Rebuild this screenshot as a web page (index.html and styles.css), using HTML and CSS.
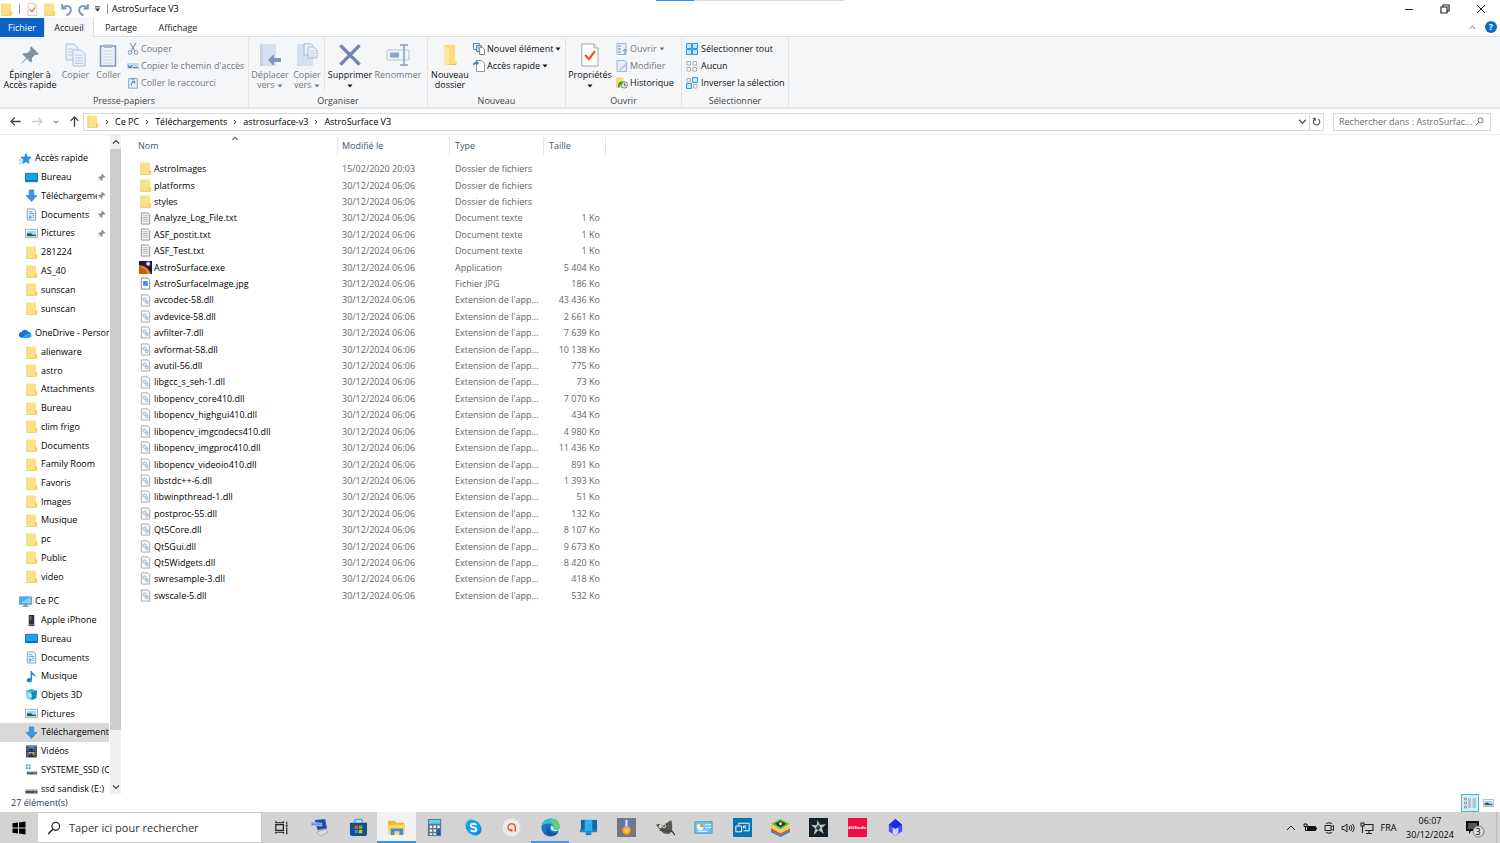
FILE: index.html
```html
<!DOCTYPE html>
<html lang="fr">
<head>
<meta charset="utf-8">
<title>AstroSurface V3</title>
<link rel="stylesheet" href="styles.css">
</head>
<body>
<svg class="defs" aria-hidden="true">
  <symbol id="folder" viewBox="0 0 12 13"><path d="M1 .5h9.500V8L12 9v3.500H1z" fill="#fbe08a"/><path d="M1 .5h1v12H1z" fill="#f1cf67"/><path d="M9.500 8.500H11v3.500H9.500z" fill="#f3c94f"/><path d="M1 12h10v.8H1z" fill="#eccb62"/></symbol>
  <symbol id="bigfolder" viewBox="0 0 16 24"><path d="M2 2h11v16l2 1v3H2z" fill="#fbdc76"/><path d="M2 2l5 3v18l-5-2z" fill="#ffe9a0"/><path d="M7 21h7v1H7z" fill="#edc14d"/></symbol>
  <symbol id="txt" viewBox="0 0 12 14"><path d="M1.500 1h7l2 2v10h-9z" fill="#f6f6f6" stroke="#8d8d8d"/><path d="M3 4h6M3 6h6M3 8h6M3 10h6" stroke="#a9a9a9" stroke-width=".9"/></symbol>
  <symbol id="dll" viewBox="0 0 12 14"><path d="M1.500 1h7l2 2v10h-9z" fill="#fafafa" stroke="#a4a4a4"/><circle cx="5" cy="6" r="1.900" fill="#dce8f0" stroke="#9aaebc" stroke-width=".8"/><circle cx="7.500" cy="9" r="1.600" fill="#d2e5f4" stroke="#91a9bd" stroke-width=".8"/></symbol>
  <symbol id="jpg" viewBox="0 0 12 14"><path d="M1.500 1h7l2 2v10h-9z" fill="#fff" stroke="#808080"/><path d="M3.500 4.500h5v5h-5z" fill="#2086e0"/><path d="M4 9l4-4v1L5 9z" fill="#9ed8ff"/></symbol>
  <symbol id="exe" viewBox="0 0 12 12"><path d="M0 0h12v12H0z" fill="#22183f"/><path d="M0 4c5 0 9 3 11 8H0z" fill="#e78a10"/><path d="M0 5c4 1 6 3 8 7H0z" fill="#c45c08"/><circle cx="8.500" cy="2.500" r="2" fill="#a9a5ff"/><circle cx="8.500" cy="2.500" r="1" fill="#fff"/></symbol>
  <symbol id="pin" viewBox="0 0 16 16"><path d="M9 1l6 6-1.500 1-1.500-.3-2.500 2.600.2 2.700L8.500 14 5.600 11 1 15.200.8 15 5 10.400 2 7.500l1-1.200 2.700.2L8.300 4 8 2.500z" fill="#8493a0"/></symbol>
  <symbol id="star" viewBox="0 0 12 12"><path d="M6.500 .5l1.400 3.700 4 .4-3 2.600.9 4-3.300-2-3.500 2 .9-4-3-2.600 4-.4z" fill="#2f8fe0"/><path d="M0 11l4-3M0 8l2-1" stroke="#7fc0f5"/></symbol>
  <symbol id="desk" viewBox="0 0 14 12"><path d="M.5 1.500h13v9H.5z" fill="#1aa0f0" stroke="#0c6fc0"/><path d="M1 9h12v1H1z" fill="#0a5ea8"/></symbol>
  <symbol id="down" viewBox="0 0 14 14"><path d="M4.500 1h5v6H13l-6 6.500L1 7h3.500z" fill="#3d96e4" stroke="#2675c4" stroke-width=".6"/></symbol>
  <symbol id="docs" viewBox="0 0 12 14"><path d="M1.500 1h7l2 2v10h-9z" fill="#f4f9fc" stroke="#8a99a5"/><path d="M3 4h4M3 6h6M7 8h2M7 10h2" stroke="#4aa0d8"/><path d="M3 8h3v3.500H3z" fill="#6bb5e3"/></symbol>
  <symbol id="pics" viewBox="0 0 14 12"><path d="M.5 1.500h13v9H.5z" fill="#fff" stroke="#9aa8b0"/><path d="M2 3h10v6H2z" fill="#a7d5f2"/><path d="M2 6l4-.5 3 2 3-.5v2H2z" fill="#276075"/></symbol>
  <symbol id="cloud" viewBox="0 0 14 10"><path d="M3 9.500a3 3 0 01-.3-6A4 4 0 0110 3a3.300 3.300 0 01.5 6.500z" fill="#147ad0"/><path d="M3 9.500l6-4.500c3-.6 5 1 4.500 3-.4 1-1 1.500-2.500 1.500z" fill="#28a4ec"/></symbol>
  <symbol id="pc" viewBox="0 0 14 13"><path d="M.5 1.500h13v8H.5z" fill="#3cb4f3" stroke="#6e99b8"/><path d="M2 8l9-6h2v6z" fill="#7dd0fa"/><path d="M5 10h4v1.500h2v1H3v-1h2z" fill="#8297a6"/></symbol>
  <symbol id="phone" viewBox="0 0 12 14"><path d="M3 1h6v12H3z" fill="#303236"/><path d="M4 3h2v1H4zM4 5h2v1H4z" fill="#79d18b"/><path d="M3 11h6v1H3z" fill="#888"/></symbol>
  <symbol id="music" viewBox="0 0 12 14"><path d="M5 1h1.500c.5 3 4.500 3 3.500 7-.6-2-2-2.500-3.500-2.500V11a2.800 2.300 0 11-1.500-2z" fill="#148ae2"/></symbol>
  <symbol id="cube" viewBox="0 0 14 14"><path d="M1 3l6-2 6 2-1 8-5 2-5-2z" fill="#29b5cf"/><path d="M1 3l6 2v8l-5-2z" fill="#83dcea"/><path d="M7 5l6-2-1 8-5 2z" fill="#0d8fae"/><path d="M4 6l3 1v3l-3-1z" fill="#fff" opacity=".7"/></symbol>
  <symbol id="film" viewBox="0 0 12 13"><path d="M.5.5h11v12H.5z" fill="#3b3d42"/><path d="M3 1h6v5H3z" fill="#498dd1"/><path d="M3 7h6v5H3z" fill="#d99d4f"/><path d="M1.500 1v11M10.500 1v11" stroke="#a7a7a7" stroke-dasharray="1 1"/><path d="M3 4l3-1 3 2v1H3zM3 10l3-2 3 3v1H3z" fill="#233965"/></symbol>
  <symbol id="ssd" viewBox="0 0 14 13"><path d="M1 1h2v2H1zM4 1h2v2H4zM1 4h2v2H1zM4 4h2v2H4z" fill="#16a6ee"/><path d="M3 8h9l1 1.500v2.500H2V9.500z" fill="#565a5c"/><path d="M3 8h9l1 1.500H2z" fill="#c5c8c9"/><path d="M10 11h2" stroke="#4bd16b"/></symbol>
  <symbol id="drive" viewBox="0 0 14 13"><path d="M2 7h10l1.500 2v3H.5V9z" fill="#494c4e"/><path d="M2 7h10l1.500 2H.5z" fill="#c5c8c9"/><path d="M10 10.500h2" stroke="#4bd16b"/></symbol>
  <symbol id="chev" viewBox="0 0 8 8"><path d="M1 2.500L4 5.500 7 2.500" fill="none" stroke="currentColor" stroke-width="1.200"/></symbol>
  <symbol id="chevr" viewBox="0 0 8 8"><path d="M3 2L5 4 3 6" fill="none" stroke="currentColor"/></symbol>
  <symbol id="tri" viewBox="0 0 6 4"><path d="M.5.5h5L3 3.500z" fill="currentColor"/></symbol>
  <symbol id="check" viewBox="0 0 18 24"><path d="M.8 1H13l4 4v18H.8z" fill="#fff" stroke="#a2a5a8"/><path d="M13 1v4h4" fill="#eee" stroke="#a2a5a8"/><path d="M4 12l4 4 6-8" fill="none" stroke="#ec5d1c" stroke-width="2.200"/></symbol>
  <symbol id="copy" viewBox="0 0 22 24"><g fill="#eaf1fa" stroke="#afc0d8"><path d="M1 1h8l4 4v12H1z"/><path d="M8 7h8l4 4v12H8z"/></g><path d="M3 6h5M3 9h4M3 12h4M10 12h7M10 15h8M10 18h8M10 20.500h8" stroke="#b8cae3"/></symbol>
  <symbol id="paste" viewBox="0 0 18 24"><path d="M1.500 3h15v20h-15z" fill="#eef3fa" stroke="#7f98be" stroke-width="1.500"/><path d="M5 1.500h8v3.500H5z" fill="#a9b8cf"/><path d="M4 8h10M4 11h10M4 14h10M4 17h10M4 20h10" stroke="#c4d3e8"/></symbol>
  <symbol id="cut" viewBox="0 0 12 12"><path d="M3 0l5 8M9 0L4 8" stroke="#8399b5" stroke-width="1.200"/><circle cx="3" cy="9.500" r="1.800" fill="none" stroke="#7893bb"/><circle cx="9" cy="9.500" r="1.800" fill="none" stroke="#7893bb"/></symbol>
  <symbol id="path" viewBox="0 0 12 12"><path d="M0 3h12v6H0z" fill="#c9daf0"/><path d="M1 5l1 3 1-2 1 2 1-3M6 7.500h5" stroke="#6381ab" fill="none"/></symbol>
  <symbol id="shortcut" viewBox="0 0 12 14"><path d="M1 2h10v11H1z" fill="#eef3fa" stroke="#7590bb"/><path d="M4 1h4v2H4z" fill="#8498b6"/><path d="M4 10c0-3 1-4 3-4M5 5h3v3" fill="none" stroke="#557fb8" stroke-width="1.200"/></symbol>
  <symbol id="move" viewBox="0 0 22 24"><path d="M1 1h16v22H1z" fill="#d4e0f0"/><path d="M1 1l3 2v20H1z" fill="#c3d3e8"/><path d="M9 17l6-6v4h7v4h-7v4z" fill="#8096b8"/></symbol>
  <symbol id="copyto" viewBox="0 0 22 24"><path d="M1 1h16v22H1z" fill="#d4e0f0"/><g fill="#e9f0f9" stroke="#a8bbd7"><path d="M8 .8h7l2 2V12H8z"/><path d="M12 4h6l3 3v8h-9z"/></g><path d="M14 8h5M14 10.500h5M14 13h5" stroke="#bdcde3"/></symbol>
  <symbol id="del" viewBox="0 0 20 20"><path d="M2 2l16 16M18 2L2 18" stroke="#7085a9" stroke-width="2.800"/></symbol>
  <symbol id="ren" viewBox="0 0 24 24"><path d="M1 7h22v10H1z" fill="#eef3fa" stroke="#b5c5dc"/><path d="M4 9.500h9v5H4z" fill="#8ea5c9"/><path d="M14 2h8M18 2v20M14 22h8" stroke="#8fa0bb" stroke-width="1.600"/></symbol>
  <symbol id="newitem" viewBox="0 0 12 12"><path d="M.5.5h6v6h-6z" fill="#e2f0f7" stroke="#528fae"/><path d="M3.500 2.500h5v6h-5z" fill="#a8d3e6" stroke="#528fae"/><path d="M6.500 4.500h3l2 2v5h-5z" fill="#fff" stroke="#888"/></symbol>
  <symbol id="easy" viewBox="0 0 12 12"><path d="M3.500.5h5l3 3v8h-8z" fill="#fff" stroke="#999"/><path d="M0 6c0-3 1-4 3-4V0l3 3-3 3V4C1.500 4 1 5 0 6z" fill="#2786cb"/></symbol>
  <symbol id="open" viewBox="0 0 12 12"><path d="M1 .5h9v11H1z" fill="#e4edf8" stroke="#a2b6d1"/><path d="M2.500 3h2M2.500 6h2M2.500 9h2" stroke="#7792bb" stroke-width="1.500"/><path d="M9 11V6M7 8l2-2 2 2" fill="none" stroke="#7592bd"/></symbol>
  <symbol id="edit" viewBox="0 0 12 12"><path d="M1 .5h7l2.500 2v9H1z" fill="#e4edf8" stroke="#a2b6d1"/><path d="M3 10l7-7 1.500 1.500-7 6z" fill="#b0c4e0"/></symbol>
  <symbol id="hist" viewBox="0 0 13 12"><path d="M0 0h8v11H0z" fill="#f8db73"/><circle cx="9" cy="8" r="3.500" fill="#eee" stroke="#777"/><path d="M9 6v2.500h2" stroke="#555" fill="none"/><path d="M2 11c0-4 1-6 3-6V3.500L8 6 5 8.500V7c-1 1-1 2-1 4z" fill="#21a338"/></symbol>
  <symbol id="all" viewBox="0 0 12 12"><path d="M.5.5h5v5h-5zM6.500.5h5v5h-5zM.5 6.500h5v5h-5zM6.500 6.500h5v5h-5z" fill="#bfe4fb" stroke="#2f98df"/></symbol>
  <symbol id="none" viewBox="0 0 12 12"><path d="M1 1.500h3.500V5H1zM7 1.500h3.500V5H7zM1 7.500h3.500V11H1zM7 7.500h3.500V11H7z" fill="#fff" stroke="#a8adb1"/></symbol>
  <symbol id="inv" viewBox="0 0 12 12"><path d="M1 1.500h3.500V5H1zM7.500 7.500H11V11H7.500z" fill="#fff" stroke="#a8adb1"/><path d="M6.500.5h5v5h-5zM.5 6.500h5v5h-5z" fill="#bfe4fb" stroke="#2f98df"/></symbol>
  <symbol id="undo" viewBox="0 0 12 12"><path d="M2 1v4h4M2.500 4.500C6 1 10 3 10 6.500 10 9 8 10.500 6 11.500" fill="none" stroke="#7e96b8" stroke-width="1.800"/></symbol>
  <symbol id="mag" viewBox="0 0 12 12"><circle cx="7.500" cy="4.500" r="3.300" fill="none" stroke="currentColor"/><path d="M5 7l-4 4.200" stroke="currentColor" stroke-width="1.200"/></symbol>
  <symbol id="arrow" viewBox="0 0 10 10"><path d="M9 5H1.500M4.500 2l-3 3 3 3" fill="none" stroke="currentColor"/></symbol>
</svg>

<header class="titlebar">
  <div class="qat">
    <svg class="i"><use href="#folder"/></svg><span class="bar"></span>
    <button aria-label="Propriétés"><svg class="i"><use href="#check"/></svg></button>
    <button aria-label="Nouveau dossier"><svg class="i"><use href="#folder"/></svg></button>
    <button aria-label="Annuler"><svg class="i"><use href="#undo"/></svg></button>
    <button aria-label="Rétablir"><svg class="i flip"><use href="#undo"/></svg></button>
    <button class="more" aria-label="Personnaliser"><svg viewBox="0 0 7 6"><path d="M1 .8h5" stroke="#333"/><path d="M.8 2.500h5.400L3.500 5.500z" fill="#333"/></svg></button><span class="bar"></span>
  </div>
  <h1>AstroSurface V3</h1>
  <div class="accent"></div>
  <div class="winbtns">
    <button aria-label="Réduire"><svg viewBox="0 0 10 10"><path d="M1 5.500h8" stroke="#222"/></svg></button>
    <button aria-label="Restaurer"><svg viewBox="0 0 10 10"><path d="M1 3h6v6H1zM3 3V1h6v6H7" fill="none" stroke="#222" stroke-width="1.200"/></svg></button>
    <button aria-label="Fermer"><svg viewBox="0 0 10 10"><path d="M1 1l8 8M9 1L1 9" stroke="#222"/></svg></button>
  </div>
</header>

<nav class="tabs">
  <button class="file">Fichier</button><button class="on">Accueil</button><button>Partage</button><button>Affichage</button>
  <span class="grow"></span>
  <button class="fold" aria-label="Réduire le ruban"><svg class="flipy"><use href="#chev"/></svg></button>
  <button class="help" aria-label="Aide">?</button>
</nav>

<section class="ribbon">
  <div class="group clip">
    <div class="tools">
      <button class="big"><svg class="pinicon"><use href="#pin"/></svg>Épingler à<br>Accès rapide</button>
      <button class="big off"><svg><use href="#copy"/></svg>Copier</button>
      <button class="big off"><svg><use href="#paste"/></svg>Coller</button>
      <div class="stack off">
        <button><svg><use href="#cut"/></svg>Couper</button>
        <button><svg><use href="#path"/></svg>Copier le chemin d'accès</button>
        <button><svg><use href="#shortcut"/></svg>Coller le raccourci</button>
      </div>
    </div>
    <h2>Presse-papiers</h2>
  </div>
  <div class="group organise">
    <div class="tools">
      <button class="big off"><svg><use href="#move"/></svg>Déplacer<br>vers <svg class="t"><use href="#tri"/></svg></button>
      <button class="big off"><svg><use href="#copyto"/></svg>Copier<br>vers <svg class="t"><use href="#tri"/></svg></button>
      <button class="big rule"><svg><use href="#del"/></svg>Supprimer<br><svg class="t"><use href="#tri"/></svg></button>
      <button class="big off"><svg><use href="#ren"/></svg>Renommer</button>
    </div>
    <h2>Organiser</h2>
  </div>
  <div class="group new">
    <div class="tools">
      <button class="big"><svg><use href="#bigfolder"/></svg>Nouveau<br>dossier</button>
      <div class="stack">
        <button><svg><use href="#newitem"/></svg>Nouvel élément <svg class="t"><use href="#tri"/></svg></button>
        <button><svg><use href="#easy"/></svg>Accès rapide <svg class="t"><use href="#tri"/></svg></button>
      </div>
    </div>
    <h2>Nouveau</h2>
  </div>
  <div class="group open">
    <div class="tools">
      <button class="big"><svg><use href="#check"/></svg>Propriétés<br><svg class="t"><use href="#tri"/></svg></button>
      <div class="stack">
        <button class="off"><svg><use href="#open"/></svg>Ouvrir <svg class="t"><use href="#tri"/></svg></button>
        <button class="off"><svg><use href="#edit"/></svg>Modifier</button>
        <button><svg><use href="#hist"/></svg>Historique</button>
      </div>
    </div>
    <h2>Ouvrir</h2>
  </div>
  <div class="group select">
    <div class="tools">
      <div class="stack">
        <button><svg><use href="#all"/></svg>Sélectionner tout</button>
        <button><svg><use href="#none"/></svg>Aucun</button>
        <button><svg><use href="#inv"/></svg>Inverser la sélection</button>
      </div>
    </div>
    <h2>Sélectionner</h2>
  </div>
</section>

<section class="address">
  <div class="navbtns">
    <button aria-label="Précédent"><svg><use href="#arrow"/></svg></button>
    <button class="dim" aria-label="Suivant"><svg class="flip"><use href="#arrow"/></svg></button>
    <button class="small" aria-label="Récents"><svg><use href="#chev"/></svg></button>
    <button aria-label="Dossier parent"><svg class="up"><use href="#arrow"/></svg></button>
  </div>
  <div class="crumbs">
    <svg class="i"><use href="#folder"/></svg>
    <svg class="c"><use href="#chevr"/></svg><a href="#pc-root">Ce PC</a>
    <svg class="c"><use href="#chevr"/></svg><a href="#dl">Téléchargements</a>
    <svg class="c"><use href="#chevr"/></svg><a href="#v3">astrosurface-v3</a>
    <svg class="c"><use href="#chevr"/></svg><a href="#as">AstroSurface V3</a>
    <span class="grow"></span>
    <button aria-label="Emplacements"><svg><use href="#chev"/></svg></button>
    <button class="refresh" aria-label="Actualiser"><svg viewBox="0 0 10 10"><path d="M3.500 2A3.600 3.600 0 107 2.200M3.500 4.500V1.500H1" fill="none" stroke="#555" stroke-width="1.200"/></svg></button>
  </div>
  <label class="find"><input type="text" placeholder="Rechercher dans : AstroSurfac..." aria-label="Rechercher"><svg><use href="#mag"/></svg></label>
</section>

<main class="content">
  <nav class="tree">
    <div class="branch quick">
      <a class="root" href="#q"><svg><use href="#star"/></svg><span>Accès rapide</span></a>
      <a href="#q1"><svg><use href="#desk"/></svg><span>Bureau</span><svg class="p"><use href="#pin"/></svg></a>
      <a href="#q2"><svg><use href="#down"/></svg><span>Téléchargements</span><svg class="p"><use href="#pin"/></svg></a>
      <a href="#q3"><svg><use href="#docs"/></svg><span>Documents</span><svg class="p"><use href="#pin"/></svg></a>
      <a href="#q4"><svg><use href="#pics"/></svg><span>Pictures</span><svg class="p"><use href="#pin"/></svg></a>
      <a href="#q5"><svg><use href="#folder"/></svg><span>281224</span></a>
      <a href="#q6"><svg><use href="#folder"/></svg><span>AS_40</span></a>
      <a href="#q7"><svg><use href="#folder"/></svg><span>sunscan</span></a>
      <a href="#q8"><svg><use href="#folder"/></svg><span>sunscan</span></a>
    </div>
    <div class="branch onedrive">
      <a class="root" href="#o"><svg><use href="#cloud"/></svg><span>OneDrive - Personal</span></a>
      <a href="#o1"><svg><use href="#folder"/></svg><span>alienware</span></a>
      <a href="#o2"><svg><use href="#folder"/></svg><span>astro</span></a>
      <a href="#o3"><svg><use href="#folder"/></svg><span>Attachments</span></a>
      <a href="#o4"><svg><use href="#folder"/></svg><span>Bureau</span></a>
      <a href="#o5"><svg><use href="#folder"/></svg><span>clim frigo</span></a>
      <a href="#o6"><svg><use href="#folder"/></svg><span>Documents</span></a>
      <a href="#o7"><svg><use href="#folder"/></svg><span>Family Room</span></a>
      <a href="#o8"><svg><use href="#folder"/></svg><span>Favoris</span></a>
      <a href="#o9"><svg><use href="#folder"/></svg><span>Images</span></a>
      <a href="#o10"><svg><use href="#folder"/></svg><span>Musique</span></a>
      <a href="#o11"><svg><use href="#folder"/></svg><span>pc</span></a>
      <a href="#o12"><svg><use href="#folder"/></svg><span>Public</span></a>
      <a href="#o13"><svg><use href="#folder"/></svg><span>video</span></a>
    </div>
    <div class="branch thispc">
      <a class="root" href="#p"><svg><use href="#pc"/></svg><span>Ce PC</span></a>
      <a href="#p1"><svg><use href="#phone"/></svg><span>Apple iPhone</span></a>
      <a href="#p2"><svg><use href="#desk"/></svg><span>Bureau</span></a>
      <a href="#p3"><svg><use href="#docs"/></svg><span>Documents</span></a>
      <a href="#p4"><svg><use href="#music"/></svg><span>Musique</span></a>
      <a href="#p5"><svg><use href="#cube"/></svg><span>Objets 3D</span></a>
      <a href="#p6"><svg><use href="#pics"/></svg><span>Pictures</span></a>
      <a class="sel" href="#p7"><svg><use href="#down"/></svg><span>Téléchargements</span></a>
      <a href="#p8"><svg><use href="#film"/></svg><span>Vidéos</span></a>
      <a href="#p9"><svg><use href="#ssd"/></svg><span>SYSTEME_SSD (C:)</span></a>
      <a href="#p10"><svg><use href="#drive"/></svg><span>ssd sandisk (E:)</span></a>
    </div>
  </nav>
  <div class="scroll"><button aria-label="Haut"><svg class="flipy"><use href="#chev"/></svg></button><div class="track"><div class="thumb"></div></div><button aria-label="Bas"><svg><use href="#chev"/></svg></button></div>
  <div class="list">
    <svg class="sort"><use href="#chev"/></svg>
    <table>
      <colgroup><col class="c1"><col class="c2"><col class="c3"><col class="c4"></colgroup>
      <thead><tr><th>Nom</th><th>Modifié le</th><th>Type</th><th>Taille</th></tr></thead>
      <tbody>
        <tr><td><svg><use href="#folder"/></svg>AstroImages</td><td>15/02/2020 20:03</td><td>Dossier de fichiers</td><td></td></tr>
        <tr><td><svg><use href="#folder"/></svg>platforms</td><td>30/12/2024 06:06</td><td>Dossier de fichiers</td><td></td></tr>
        <tr><td><svg><use href="#folder"/></svg>styles</td><td>30/12/2024 06:06</td><td>Dossier de fichiers</td><td></td></tr>
        <tr><td><svg><use href="#txt"/></svg>Analyze_Log_File.txt</td><td>30/12/2024 06:06</td><td>Document texte</td><td>1 Ko</td></tr>
        <tr><td><svg><use href="#txt"/></svg>ASF_postit.txt</td><td>30/12/2024 06:06</td><td>Document texte</td><td>1 Ko</td></tr>
        <tr><td><svg><use href="#txt"/></svg>ASF_Test.txt</td><td>30/12/2024 06:06</td><td>Document texte</td><td>1 Ko</td></tr>
        <tr><td><svg><use href="#exe"/></svg>AstroSurface.exe</td><td>30/12/2024 06:06</td><td>Application</td><td>5 404 Ko</td></tr>
        <tr><td><svg><use href="#jpg"/></svg>AstroSurfaceImage.jpg</td><td>30/12/2024 06:06</td><td>Fichier JPG</td><td>186 Ko</td></tr>
        <tr><td><svg><use href="#dll"/></svg>avcodec-58.dll</td><td>30/12/2024 06:06</td><td>Extension de l'app...</td><td>43 436 Ko</td></tr>
        <tr><td><svg><use href="#dll"/></svg>avdevice-58.dll</td><td>30/12/2024 06:06</td><td>Extension de l'app...</td><td>2 661 Ko</td></tr>
        <tr><td><svg><use href="#dll"/></svg>avfilter-7.dll</td><td>30/12/2024 06:06</td><td>Extension de l'app...</td><td>7 639 Ko</td></tr>
        <tr><td><svg><use href="#dll"/></svg>avformat-58.dll</td><td>30/12/2024 06:06</td><td>Extension de l'app...</td><td>10 138 Ko</td></tr>
        <tr><td><svg><use href="#dll"/></svg>avutil-56.dll</td><td>30/12/2024 06:06</td><td>Extension de l'app...</td><td>775 Ko</td></tr>
        <tr><td><svg><use href="#dll"/></svg>libgcc_s_seh-1.dll</td><td>30/12/2024 06:06</td><td>Extension de l'app...</td><td>73 Ko</td></tr>
        <tr><td><svg><use href="#dll"/></svg>libopencv_core410.dll</td><td>30/12/2024 06:06</td><td>Extension de l'app...</td><td>7 070 Ko</td></tr>
        <tr><td><svg><use href="#dll"/></svg>libopencv_highgui410.dll</td><td>30/12/2024 06:06</td><td>Extension de l'app...</td><td>434 Ko</td></tr>
        <tr><td><svg><use href="#dll"/></svg>libopencv_imgcodecs410.dll</td><td>30/12/2024 06:06</td><td>Extension de l'app...</td><td>4 980 Ko</td></tr>
        <tr><td><svg><use href="#dll"/></svg>libopencv_imgproc410.dll</td><td>30/12/2024 06:06</td><td>Extension de l'app...</td><td>11 436 Ko</td></tr>
        <tr><td><svg><use href="#dll"/></svg>libopencv_videoio410.dll</td><td>30/12/2024 06:06</td><td>Extension de l'app...</td><td>891 Ko</td></tr>
        <tr><td><svg><use href="#dll"/></svg>libstdc++-6.dll</td><td>30/12/2024 06:06</td><td>Extension de l'app...</td><td>1 393 Ko</td></tr>
        <tr><td><svg><use href="#dll"/></svg>libwinpthread-1.dll</td><td>30/12/2024 06:06</td><td>Extension de l'app...</td><td>51 Ko</td></tr>
        <tr><td><svg><use href="#dll"/></svg>postproc-55.dll</td><td>30/12/2024 06:06</td><td>Extension de l'app...</td><td>132 Ko</td></tr>
        <tr><td><svg><use href="#dll"/></svg>Qt5Core.dll</td><td>30/12/2024 06:06</td><td>Extension de l'app...</td><td>8 107 Ko</td></tr>
        <tr><td><svg><use href="#dll"/></svg>Qt5Gui.dll</td><td>30/12/2024 06:06</td><td>Extension de l'app...</td><td>9 673 Ko</td></tr>
        <tr><td><svg><use href="#dll"/></svg>Qt5Widgets.dll</td><td>30/12/2024 06:06</td><td>Extension de l'app...</td><td>8 420 Ko</td></tr>
        <tr><td><svg><use href="#dll"/></svg>swresample-3.dll</td><td>30/12/2024 06:06</td><td>Extension de l'app...</td><td>418 Ko</td></tr>
        <tr><td><svg><use href="#dll"/></svg>swscale-5.dll</td><td>30/12/2024 06:06</td><td>Extension de l'app...</td><td>532 Ko</td></tr>
      </tbody>
    </table>
  </div>
</main>

<footer class="status">
  <span>27 élément(s)</span><span class="grow"></span>
  <button class="view on" aria-label="Détails"><svg viewBox="0 0 14 14"><path d="M1.500 2h2v2h-2zM1.500 6h2v2h-2zM1.500 10h2v2h-2z" fill="#fff" stroke="#a67877" stroke-width=".8"/><path d="M5 3h3M9.500 3h3.500M5 7h3M9.500 7h3.500M5 11h3M9.500 11h3.500M5 5h3M9.500 5h3.500M5 9h3M9.500 9h3.500" stroke="#718c9f" stroke-width=".8"/></svg></button>
  <button class="view" aria-label="Grandes icônes"><svg class="thumbview"><use href="#pics"/></svg></button>
</footer>

<div class="taskbar">
  <button class="start" aria-label="Démarrer"><svg viewBox="0 0 14 14"><path d="M.5 2.300l5.500-.8v5H.5zM7 1.400L13.500.5v6H7zM.5 7.500H6v5l-5.500-.8zM7 7.500h6.500v6L7 12.600z" fill="#000"/></svg></button>
  <label class="ask"><svg><use href="#mag"/></svg><input type="text" placeholder="Taper ici pour rechercher" aria-label="Taper ici pour rechercher"></label>
  <div class="apps">
    <button aria-label="Vue des tâches"><svg viewBox="0 0 20 20"><path d="M4 7h8v6H4zM4 3.500v1.500h8V3.500M4 16.500V15h8v1.500M15.500 4v2M15.500 10v7" fill="none" stroke="#222" stroke-width="1.300"/><path d="M14.500 7h2v2h-2z" fill="#222"/></svg></button>
    <button aria-label="Écran"><svg viewBox="0 0 20 20"><path d="M5 2l11-1 2 10-10 2z" fill="#2c55c8"/><path d="M8 3l7-1 1 8-7 1z" fill="#234094"/><path d="M1 4l12 1v4L1 8z" fill="#8bb9ec"/><path d="M2 6.500h10" stroke="#3976c9" stroke-dasharray="2 1"/><path d="M7 15l9-3 3 3-8 4z" fill="#d8dde8" stroke="#8b94a5" stroke-width=".6"/></svg></button>
    <button aria-label="Store"><svg viewBox="0 0 20 20"><path d="M6 5V3q0-1.500 1.500-1.500h5Q14 1.500 14 3v2" fill="none" stroke="#33a9e9" stroke-width="1.300"/><path d="M1 5h18v11q0 3-3 3H4q-3 0-3-3z" fill="#124f8e"/><path d="M6 8h3.500v3.500H6z" fill="#f25022"/><path d="M10.500 8H14v3.500h-3.500z" fill="#7fba00"/><path d="M6 12.500h3.500V16H6z" fill="#00a4ef"/><path d="M10.500 12.500H14V16h-3.500z" fill="#ffb900"/></svg></button>
    <button class="active" aria-label="Explorateur"><svg viewBox="0 0 20 20"><path d="M1 3h7l2 2h8v12H1z" fill="#f4b62c"/><path d="M1 7h18v10H1z" fill="#ffd75e"/><path d="M4 11h13v7h-4v-4H8v4H4z" fill="#3c91d8"/></svg></button>
    <button aria-label="Calculatrice"><svg viewBox="0 0 20 20"><path d="M3 1h14v18H3z" fill="#5b7790"/><path d="M4 2h12v4H4z" fill="#5fd0f3"/><path d="M5 8h2.500v2.500H5zM9 8h2.500v2.500H9zM5 12h2.500v2.500H5zM9 12h2.500v2.500H9zM5 16h2.500v2H5zM9 16h2.500v2H9zM13 8h2.500v2.500H13z" fill="#eef5f9"/><path d="M13 12h3v6h-3z" fill="#16569b"/></svg></button>
    <button aria-label="Skype"><svg viewBox="0 0 20 20"><circle cx="8" cy="8" r="6.500" fill="#16a9ee"/><circle cx="12" cy="12" r="6.500" fill="#0888d8"/><circle cx="10" cy="10" r="7.500" fill="#0ba0e8"/><path d="M13 7.500c-1-2-6-2-6 .3 0 2.700 6 1.500 6 4.200 0 2.500-5 2.500-6 .5" fill="none" stroke="#fff" stroke-width="2"/></svg></button>
    <button aria-label="Musique"><svg viewBox="0 0 20 20"><circle cx="10" cy="10" r="9.500" fill="#efe9e6"/><path d="M11 13.500a3.800 3.800 0 113-4v5M11 13.500l-2-2" fill="none" stroke="#e5533b" stroke-width="1.500"/></svg></button>
    <button class="running" aria-label="Edge"><svg viewBox="0 0 20 20"><circle cx="10" cy="10" r="9.500" fill="#1675cb"/><path d="M1 8C2-2 20-2 19.500 9c0 4-4 5-7 3 2-4-2-7-6-6-3 0-5 1-5.500 2z" fill="#34bfd0"/><path d="M10 .6C16 0 20 4 19.500 9c0 4-4 5-7 3C15 8 11 5 10 .6z" fill="#61cf75"/><path d="M11 8c-4 0-4 7 2 8 2 .4 4-.5 5-1-1 2-4 4-7 4-7 0-7-10 0-11z" fill="#13529e"/><path d="M11 8c-2 2-.8 6 4 6 2 0 3-.5 3.500-1L20 16v-5c-2 2-5 2-7 1 0-2 0-3-2-4z" fill="#d6e9ed"/></svg></button>
    <button aria-label="Bureau à distance"><svg viewBox="0 0 20 20"><path d="M2 2h17v12H2z" fill="#1169a7"/><path d="M1 12h18v3H1z" fill="#1b84c9"/><path d="M6 2h8v12H6z" fill="#2fb0ee"/><path d="M7 15h6v3H7z" fill="#1681c5"/></svg></button>
    <button aria-label="Médaille"><svg viewBox="0 0 20 20"><path d="M0 0h20v20H0z" fill="#777"/><path d="M4 2h5v8L5 7zM11 2h4v6l-4 2z" fill="#477fe0"/><path d="M9 2h2v8H9z" fill="#eaf0ff"/><circle cx="10" cy="13" r="4.500" fill="#f6a51e"/><circle cx="10" cy="13" r="2.500" fill="#ffc957"/></svg></button>
    <button aria-label="GIMP"><svg viewBox="0 0 20 20"><path d="M0 7l3-1 3 2 4-2 6-4 1 4v8l-4 3-5-1-5-5z" fill="#5b5650"/><circle cx="4.500" cy="9" r="1.600" fill="#eee"/><circle cx="8.500" cy="8.500" r="2" fill="#eee"/><circle cx="8.500" cy="8.500" r="1" fill="#111"/><path d="M4 13l13 1 3 4" stroke="#444" stroke-width="1.300" fill="none"/></svg></button>
    <button aria-label="Panneau de configuration"><svg viewBox="0 0 20 20"><path d="M1 4h18v12H1z" fill="#74c5ef" stroke="#3b95c7"/><circle cx="6.500" cy="9.500" r="3.500" fill="#eaf7ff"/><path d="M6.500 9.500V6a3.500 3.500 0 013.500 3.500z" fill="#eb8c27"/><path d="M12 7h2M12 10h2M15 7h3M15 10h3M4 14h10" stroke="#fff" stroke-width="1.200"/></svg></button>
    <button aria-label="Partage d'écran"><svg viewBox="0 0 20 20"><path d="M0 0h20v20H0z" fill="#0876b4"/><path d="M6 8V5.500h11v8h-6M3 8.500h6v6H3zM11 8.500l3 3M11 11V8.500h3" fill="none" stroke="#fff"/></svg></button>
    <button aria-label="BlueStacks"><svg viewBox="0 0 20 20"><path d="M0 13l10 5 10-5v2l-10 5-10-5z" fill="#258ac7"/><path d="M0 10l10 6 10-5v2l-10 5-10-5z" fill="#e93f36"/><path d="M0 8l10 6 10-6v3l-10 5-10-5z" fill="#ffca1b"/><path d="M0 6l10-5 10 5-10 6z" fill="#6dc22c"/><path d="M4 6l6-3 6 3-6 4z" fill="#24362a"/><circle cx="10" cy="6" r="1.500" fill="#fff"/></svg></button>
    <button aria-label="Étoile"><svg viewBox="0 0 20 20"><path d="M0 0h20v20H0z" fill="#142027"/><path d="M9 2l2.500 5 6.500-.5-4.500 4 2 6L10 13l-5 5 1.500-7L2 7l6 .5z" fill="#b8c4c2"/><path d="M10 7l2 3-2 3-3-2z" fill="#243c3c"/></svg></button>
    <button aria-label="ASI Studio"><span class="asi">ASIStudio</span></button>
    <button aria-label="Cristal"><svg viewBox="0 0 20 20"><path d="M10 1l7 6v7l-7 5-7-5V7z" fill="#4850f2"/><path d="M10 1l7 6-7 4-7-4z" fill="#1f25d8"/><path d="M7 10l3 1.500 3-1.500v6l-3 3-3-3z" fill="#c9d2ff"/></svg></button>
  </div>
  <span class="grow"></span>
  <div class="tray">
    <button aria-label="Icônes cachées"><svg viewBox="0 0 14 14"><path d="M3 9l4-4 4 4" fill="none" stroke="#222"/></svg></button>
    <button aria-label="Batterie"><svg viewBox="0 0 14 14"><path d="M4.500 5.500h8v4h-8z" fill="#111" stroke="#111"/><path d="M13 6.500h1v2h-1z" fill="#111"/><path d="M1 3h3v2.500H1zM2.500 6v3.500h2" fill="none" stroke="#111"/></svg></button>
    <button aria-label="Caméra"><svg viewBox="0 0 14 14"><path d="M3 4.500h6v5H3zM9 6l2.500-1.500v5L9 8M4 2.500q3-1.500 6 0M4 11.500q3 1.500 6 0" fill="none" stroke="#222"/></svg></button>
    <button aria-label="Volume"><svg viewBox="0 0 14 14"><path d="M1 5.500h2L6 3v8L3 8.500H1zM8 5q1.500 2 0 4M9.800 4q2.400 3 0 6M11.500 3q3.200 4 0 8" fill="none" stroke="#222"/></svg></button>
    <button aria-label="Réseau"><svg viewBox="0 0 14 14"><path d="M4 3.500h9v6H5M9 9.500V12M6 12.500h6M1 2h3v3H1zM2.500 5v7" fill="none" stroke="#222" stroke-width="1.100"/></svg></button>
    <button class="lang">FRA</button>
    <button class="clock">06:07<br>30/12/2024</button>
    <button class="notif" aria-label="Notifications"><svg viewBox="0 0 20 20"><path d="M1 3h13v10H6l-2 3v-3H1z" fill="#111"/><path d="M3 6h9M3 8h9M3 10h6" stroke="#bbb" stroke-width=".8"/><circle cx="13.500" cy="13.500" r="5.500" fill="#ddd" stroke="#777"/></svg><span>3</span></button>
  </div>
</div>
</body>
</html>
```
FILE: styles.css
```css
* { box-sizing: border-box; }
body {
  margin: 0; height: 100vh; display: flex; flex-direction: column; overflow: hidden;
  background: #fff; color: #000; font: 9px/12px "Open Sans", "Noto Sans", sans-serif;
}
button { border: 0; padding: 0; background: none; font: inherit; color: inherit; white-space: nowrap; }
a { color: inherit; text-decoration: none; }
input { border: 0; padding: 0; background: none; font: inherit; outline: 0; }
h1, h2 { margin: 0; font: inherit; }
svg { display: block; flex: none; }
.defs { display: none; }
.grow { flex: 1; }
.i { width: 13px; height: 13px; }
.flip { transform: scaleX(-1); }
.flipy { transform: scaleY(-1); }
.up { transform: rotate(90deg); }

.titlebar { display: flex; align-items: center; height: 18px; flex: none; position: relative; }
.qat { display: flex; align-items: center; gap: 4px; }
.qat .more svg { width: 7px; height: 6px; }
.bar { width: 1px; height: 10px; background: #999; margin: 0 2px; }
.titlebar h1 { margin-left: 2px; flex: 1; }
.accent { position: absolute; top: 0; left: 656px; width: 188px; height: 1px; background: linear-gradient(90deg, #2f8fe8 38px, #ddd 38px); }
.winbtns { display: flex; padding-right: 1px; }
.winbtns button { width: 36px; display: grid; place-items: center; }
.winbtns svg { width: 10px; height: 10px; }

.tabs { display: flex; height: 19px; flex: none; border-bottom: 1px solid #dcdde0; }
.tabs button { height: 19px; padding: 0 16px; color: #222; }
.tabs .file { background: #0b63c5; color: #fff; padding: 0; width: 44px; }
.tabs .on { background: #f4f6f8; border: 1px solid #dcdde0; border-width: 0 1px; padding: 0; width: 50px; }
.tabs button:nth-child(3) { padding: 0; width: 54px; }
.tabs button:nth-child(4) { padding: 0; width: 60px; }
.tabs .fold { padding: 0 6px; color: #999; }
.tabs .fold svg { width: 7px; height: 7px; }
.tabs .help { width: 12px; height: 12px; padding: 0; margin: 3px 3px 0; border-radius: 50%; background: #0f6ac9; color: #fff; font-weight: 700; }

.ribbon { display: flex; flex: none; height: 72px; background: #f4f6f8; border-bottom: 2px solid #e4e6e8; color: #111; }
.group { border-right: 1px solid #e2e4e7; display: flex; flex-direction: column; justify-content: space-between; margin-top: 1px; }
.group h2 { text-align: center; color: #444; }
.tools { display: grid; height: 56px; }
.clip { width: 249px; }
.clip .tools { grid-template-columns: 58px 33px 33px auto; padding-left: 1px; }
.organise { width: 179px; }
.organise .tools { grid-template-columns: 42px 32px 50px 50px; }
.new { width: 138px; }
.new .tools { grid-template-columns: 44px auto; }
.open { width: 116px; }
.open .tools { grid-template-columns: 48px auto; }
.select { width: 107px; }
.big { display: flow-root; text-align: center; line-height: 10px; padding-top: 5px; align-self: start; justify-self: center; }
.big svg { width: 24px; height: 24px; margin: 0 auto 3px; }
.big .pinicon { width: 20px; height: 24px; }
.big .t, .stack .t { display: inline-block; width: 6px; height: 4px; margin: 0; vertical-align: middle; }
.rule { border-left: 1px solid #e2e4e7; padding-left: 3px; }
.off { color: #74787d; }
.stack { display: flex; flex-direction: column; padding: 2px 0 0 2px; align-items: flex-start; }
.stack button { display: flex; align-items: center; gap: 2px; height: 17px; }
.stack svg { width: 12px; height: 12px; }
.new .stack { padding-left: 1px; }
.select .stack { padding-left: 4px; }
.select .stack button { gap: 3px; }

.address { display: flex; align-items: center; height: 26px; flex: none; padding: 0 9px; border-bottom: 1px solid #ececec; }
.navbtns { display: flex; align-items: center; gap: 9px; width: 74px; color: #444; }
.navbtns svg { width: 13px; height: 13px; }
.navbtns .small svg { width: 6px; height: 6px; }
.navbtns .dim { color: #ccc; }
.crumbs { flex: 1; display: flex; align-items: center; height: 18px; border: 1px solid #d9d9d9; padding-left: 2px; }
.crumbs .c { width: 8px; height: 8px; margin: 0 4px; color: #444; }
.crumbs a { white-space: nowrap; }
.crumbs button { width: 14px; height: 16px; display: grid; place-items: center; color: #555; }
.crumbs button svg { width: 9px; height: 9px; }
.crumbs .refresh { border-left: 1px solid #d9d9d9; }
.find { display: flex; align-items: center; width: 158px; height: 18px; margin-left: 9px; border: 1px solid #d9d9d9; padding: 0 6px 0 5px; color: #444; }
.find input { flex: 1; min-width: 0; }
.find svg { width: 9px; height: 9px; }
.find input::placeholder { color: #6d6d6d; opacity: 1; }

.content { flex: 1; display: flex; min-height: 0; }
.tree { width: 109px; padding-top: 14px; display: flex; flex-direction: column; gap: 6px; overflow: hidden; }
.branch { display: grid; grid-auto-rows: 1fr; flex: none; }
.quick { min-height: 169px; }
.onedrive { min-height: 262px; }
.thispc { min-height: 206px; }
.branch a { display: flex; align-items: center; padding-left: 25px; white-space: nowrap; overflow: hidden; }
.branch .root { padding-left: 19px; }
.branch svg { width: 13px; height: 13px; margin-right: 3px; }
.branch span { flex: 1; min-width: 0; overflow: hidden; }
.branch .p { width: 9px; height: 9px; }
.branch .sel { background: #d9d9d9; }
.scroll { width: 13px; display: flex; flex-direction: column; background: #f0f0f0; border-left: 1px solid #fff; border-right: 1px solid #fff; }
.scroll button { height: 14px; display: grid; place-items: center; color: #444; }
.scroll svg { width: 8px; height: 8px; }
.track { flex: 1; }
.thumb { height: 92%; background: #cdcdcd; }
.list { flex: 1; padding-top: 2px; position: relative; }
.sort { position: absolute; left: 109px; top: 0; width: 8px; height: 7px; transform: scaleY(-1); color: #555; }
table { border-collapse: separate; border-spacing: 0; table-layout: fixed; width: 484px; height: 467px; }
.c1 { width: 216px; } .c2 { width: 112px; } .c3 { width: 94px; } .c4 { width: 62px; }
th { height: 24px; padding: 0 0 6px 5px; font-weight: 400; text-align: left; color: #3f5573; background: linear-gradient(#e4e4e4, #e4e4e4) right top / 1px 18px no-repeat; }
th:first-child { padding-left: 16px; }
td { padding: 0 0 0 5px; white-space: nowrap; color: #666; line-height: 14px; }
td:first-child { padding-left: 17px; color: #000; }
td:nth-child(2), th:nth-child(2) { padding-left: 4px; }
td:last-child { text-align: right; padding: 0 6px 0 0; }
td svg { display: inline-block; width: 13px; height: 13px; margin: -2px 2px 0 0; vertical-align: middle; }

.status { display: flex; align-items: center; height: 18px; flex: none; padding: 0 3px 0 11px; color: #1f3c66; }
.view { width: 18px; height: 18px; display: grid; place-items: center; }
.view.on { background: #d3effb; border: 1px solid #4fb2dc; }
.view svg { width: 14px; height: 14px; }
.view .thumbview { width: 11px; height: 10px; }

.taskbar { display: flex; height: 31px; flex: none; background: #d3d3d3; }
.start { width: 38px; display: grid; place-items: center; }
.start svg { width: 14px; height: 14px; }
.ask { width: 224px; display: flex; align-items: center; gap: 8px; padding-left: 9px; background: #fff; border: 1px solid #c8c8c8; border-left: 0; font-size: 11px; color: #222; }
.ask svg { width: 14px; height: 14px; }
.ask input { flex: 1; min-width: 0; }
.ask input::placeholder { color: #333; opacity: 1; }
.apps { display: flex; width: 653px; }
.apps button { flex: 1; display: grid; place-items: center; }
.apps svg { width: 19px; height: 19px; }
.apps .active { background: #f2f2f2; box-shadow: inset 0 -2px #3993e8; }
.apps .running { box-shadow: inset 0 -2px #4a96dc; }
.asi { width: 19px; height: 19px; overflow: hidden; background: #f20d42; color: #fff; font: italic 700 4px/19px "Open Sans", sans-serif; }
.tray { display: flex; padding-right: 3px; }
.tray button { width: 19px; display: grid; place-items: center; }
.tray svg { width: 14px; height: 14px; }
.tray .lang { width: 25px; }
.tray .clock { width: 58px; line-height: 14px; display: block; }
.tray .notif { width: 38px; padding-right: 6px; grid-template-areas: "a"; border-right: 1px solid #bbb; }
.notif svg, .notif span { grid-area: a; }
.notif svg { width: 20px; height: 20px; }
.notif span { padding: 8px 0 0 7px; }
```
